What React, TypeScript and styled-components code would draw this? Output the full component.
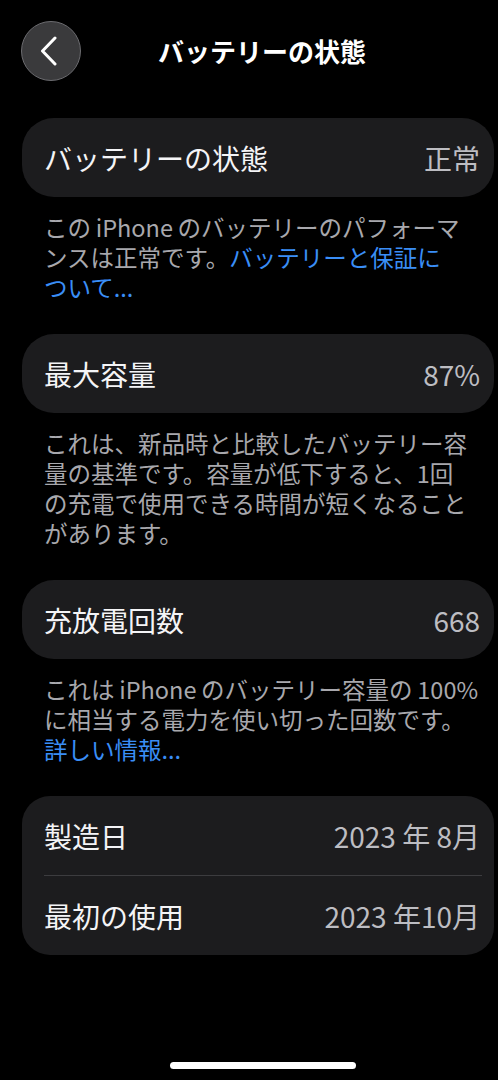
import { styled, createGlobalStyle } from "styled-components";

const GlobalStyle = createGlobalStyle`
  body {
    margin: 0;
    background: #000;
    font-family: "Noto Sans CJK JP", "Noto Sans", sans-serif;
    -webkit-font-smoothing: antialiased;
  }
`;

const Screen = styled.div`
  width: 498px;
  min-height: 1080px;
  background: #000;
  display: flex;
  flex-direction: column;
  color: #fff;
`;

const Header = styled.header`
  display: flex;
  align-items: center;
  padding: 21px 0 0 21px;
`;

const BackButton = styled.button`
  width: 60px;
  height: 60px;
  border-radius: 50%;
  background: #3a3a3c;
  border: 1px solid #6c6c70;
  display: flex;
  align-items: center;
  justify-content: center;
  padding: 0 4px 0 0;
  cursor: pointer;
`;

const Title = styled.h1`
  margin: 0 0 0 77px;
  font-size: 26px;
  font-weight: 700;
  line-height: 1;
`;

const Content = styled.main`
  padding: 37px 4px 0 22px;
`;

const Card = styled.section<{ $radius?: number }>`
  background: #1c1c1e;
  border-radius: ${(p) => p.$radius ?? 32}px;
  padding: 0 14px 0 22px;
`;

const Row = styled.div`
  height: 79px;
  display: flex;
  align-items: center;
  justify-content: space-between;
  font-size: 28px;
  line-height: 1;
`;

const Label = styled.span`
  color: #f4f4f6;
`;

const Value = styled.span`
  color: #bdbdc2;
`;

const Divider = styled.div`
  height: 1px;
  background: #3c3c3f;
  margin-right: -2px;
`;

const Note = styled.p`
  margin: 0;
  padding: 15px 14px 32px 22px;
  font-size: 23.5px;
  line-height: 30px;
  color: #a8a8ad;
  white-space: nowrap;
`;

const Link = styled.a`
  color: #3a8ef6;
  text-decoration: none;
`;

const Spacer = styled.div`
  flex: 1;
`;

const HomeBar = styled.div`
  width: 186px;
  height: 7px;
  border-radius: 4px;
  background: #fff;
  margin: 0 0 11px 170px;
`;

function ChevronLeft() {
  return (
    <svg width="22" height="30" viewBox="0 0 22 30" fill="none">
      <path
        d="M17 2 L4.5 15 L17 28"
        stroke="#fff"
        strokeWidth="3"
        strokeLinecap="round"
        strokeLinejoin="round"
      />
    </svg>
  );
}

export default function App() {
  return (
    <>
      <GlobalStyle />
      <Screen>
        <Header>
          <BackButton aria-label="戻る">
            <ChevronLeft />
          </BackButton>
          <Title>バッテリーの状態</Title>
        </Header>

        <Content>
          <Card>
            <Row>
              <Label>バッテリーの状態</Label>
              <Value>正常</Value>
            </Row>
          </Card>
          <Note>
            この{"\u2009"}iPhone{"\u2009"}のバッテリーのパフォーマ
            <br />
            ンスは正常です。<Link>バッテリーと保証に</Link>
            <br />
            <Link>ついて...</Link>
          </Note>

          <Card>
            <Row>
              <Label>最大容量</Label>
              <Value>87%</Value>
            </Row>
          </Card>
          <Note>
            これは、新品時と比較したバッテリー容
            <br />
            量の基準です。容量が低下すると、1回
            <br />
            の充電で使用できる時間が短くなること
            <br />
            があります。
          </Note>

          <Card>
            <Row>
              <Label>充放電回数</Label>
              <Value>668</Value>
            </Row>
          </Card>
          <Note>
            これは{"\u2009"}iPhone{"\u2009"}のバッテリー容量の{"\u2009"}100%
            <br />
            に相当する電力を使い切った回数です。
            <br />
            <Link>詳しい情報...</Link>
          </Note>

          <Card $radius={28}>
            <Row>
              <Label>製造日</Label>
              <Value>2023 年 8月</Value>
            </Row>
            <Divider />
            <Row>
              <Label>最初の使用</Label>
              <Value>2023 年10月</Value>
            </Row>
          </Card>
        </Content>

        <Spacer />
        <HomeBar />
      </Screen>
    </>
  );
}
